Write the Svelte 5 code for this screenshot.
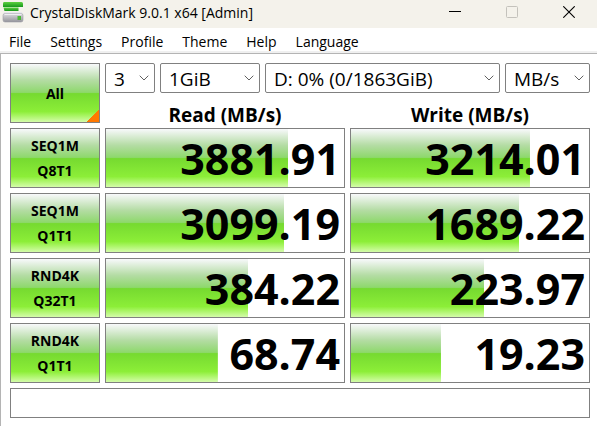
<script lang="ts">
	const menu = ['File', 'Settings', 'Profile', 'Theme', 'Help', 'Language'];

	type Test = {
		name: string;
		queue: string;
		read: string;
		write: string;
		readBar: number;
		writeBar: number;
	};

	const tests: Test[] = [
		{ name: 'SEQ1M', queue: 'Q8T1', read: '3881.91', write: '3214.01', readBar: 76.5, writeBar: 75.2 },
		{ name: 'SEQ1M', queue: 'Q1T1', read: '3099.19', write: '1689.22', readBar: 74.8, writeBar: 70.6 },
		{ name: 'RND4K', queue: 'Q32T1', read: '384.22', write: '223.97', readBar: 59.7, writeBar: 55.9 },
		{ name: 'RND4K', queue: 'Q1T1', read: '68.74', write: '19.23', readBar: 47, writeBar: 37.8 }
	];

	const settings = [
		{ id: 'count', label: 'Test count', options: ['3', '1', '5', '9'] },
		{ id: 'size', label: 'Test size', options: ['1GiB', '16MiB', '64GiB'] },
		{ id: 'drive', label: 'Target drive', options: ['D: 0% (0/1863GiB)'] },
		{ id: 'unit', label: 'Unit', options: ['MB/s', 'GB/s', 'IOPS', 'μs'] }
	];

	let comment = '';
</script>

<svelte:head>
	<title>CrystalDiskMark</title>
</svelte:head>

<div class="window">
	<header class="titlebar">
		<svg class="logo" width="22" height="22" viewBox="0 0 22 22" aria-hidden="true">
			<defs>
				<linearGradient id="leaf" x1="0" y1="0" x2="0" y2="1">
					<stop offset="0" stop-color="#5cd040" />
					<stop offset="1" stop-color="#18981c" />
				</linearGradient>
				<linearGradient id="case" x1="0" y1="0" x2="0" y2="1">
					<stop offset="0" stop-color="#dcdce0" />
					<stop offset="1" stop-color="#94949a" />
				</linearGradient>
			</defs>
			<path d="M2 11h18l1 3H1z" fill="#e8e8ec" />
			<path d="M2 1h17.500q1.500 0 1.500 1.500V6H1V2.500Q1 1 2 1z" fill="url(#leaf)" />
			<path d="M1.500 6.500h15V10h-14z" fill="url(#leaf)" />
			<rect x="1" y="12.500" width="20" height="8.500" rx="2" fill="url(#case)" stroke="#a0a0a6" stroke-width=".6" />
			<path d="M2.500 13.300h17" stroke="#f6f6f8" />
			<rect x="15.500" y="15" width="3.500" height="4" fill="#4cb838" />
		</svg>
		<h1 class="title">CrystalDiskMark 9.0.1 x64 [Admin]</h1>
		<div class="controls">
			<button class="control" aria-label="Minimize">
				<svg width="12" height="12" viewBox="0 0 12 12"><path d="M0 5.5h12" stroke="#000" /></svg>
			</button>
			<button class="control" aria-label="Maximize" disabled>
				<svg width="12" height="12" viewBox="0 0 12 12">
					<rect x=".5" y=".5" width="11" height="11" rx="1" fill="none" stroke="#c4c2bc" />
				</svg>
			</button>
			<button class="control" aria-label="Close">
				<svg width="12" height="12" viewBox="0 0 12 12"><path d="M.3.3l11.4 11.4M11.7.3L.3 11.7" stroke="#000" stroke-width="1.1" /></svg>
			</button>
		</div>
	</header>

	<nav class="menu">
		{#each menu as item}
			<button class="menu-item">{item}</button>
		{/each}
	</nav>

	<main class="body">
		<div class="row">
			<button class="run all">All</button>
			<div class="top">
				<div class="settings">
					{#each settings as setting}
						<div class="picker {setting.id}">
							<select id={setting.id} aria-label={setting.label}>
								{#each setting.options as option}
									<option>{option}</option>
								{/each}
							</select>
							<svg class="chevron" width="10" height="6" viewBox="0 0 10 6" aria-hidden="true">
								<path d="M.7.7L5 5 9.3.7" fill="none" stroke="#606060" />
							</svg>
						</div>
					{/each}
				</div>
				<div class="headings">
					<h2>Read (MB/s)</h2>
					<h2>Write (MB/s)</h2>
				</div>
			</div>
		</div>

		{#each tests as test}
			<div class="row">
				<button class="run">{test.name}<br />{test.queue}</button>
				<div class="results">
					<div class="meter" style="--level: {test.readBar}%">{test.read}</div>
					<div class="meter" style="--level: {test.writeBar}%">{test.write}</div>
				</div>
			</div>
		{/each}

		<input class="comment" type="text" aria-label="Comment" bind:value={comment} />
	</main>
</div>

<style>
	:global(body) {
		margin: 0;
		background: #fff;
	}

	* {
		box-sizing: border-box;
	}

	.window {
		--green: linear-gradient(#f8f9fb 0%, #b4dca4 28%, #8ed86c 49%, #76da30 51%, #8cee38 82%, #a4f45c 88%, #d4fcaa 100%);
		min-height: 100vh;
		display: flex;
		flex-direction: column;
		font-family: 'Segoe UI', 'Open Sans', 'Noto Sans', sans-serif;
		color: #000;
	}

	button,
	select,
	input {
		font: inherit;
		color: inherit;
		margin: 0;
		padding: 0;
	}

	.titlebar {
		display: flex;
		align-items: center;
		height: 28px;
		padding-left: 2px;
		background: #f4f2eb;
	}

	.logo {
		margin-bottom: 4px;
	}

	.title {
		flex: 1;
		margin: 0 0 2px 6px;
		font-size: 14px;
		font-weight: 400;
		line-height: 20px;
		white-space: nowrap;
	}

	.controls {
		display: flex;
		align-self: stretch;
		padding-bottom: 4px;
	}

	.control {
		display: flex;
		align-items: center;
		justify-content: center;
		width: 57px;
		border: none;
		background: none;
	}

	.menu {
		display: flex;
		gap: 1px;
		height: 26px;
		border-bottom: 1px solid #b4b4b4;
		box-shadow: inset 0 -2px #f0f0f0;
	}

	.menu-item {
		padding: 2px 9px 0;
		border: none;
		background: none;
		font-size: 14px;
		line-height: 22px;
	}

	.body {
		flex: 1;
		display: flex;
		flex-direction: column;
		gap: 5px;
		padding: 9px 7px 8px 9px;
		border-left: 1px solid #b4b4b4;
	}

	.row {
		display: flex;
		gap: 5px;
	}

	.run {
		flex: none;
		width: 90px;
		height: 60px;
		border: 1px solid #808080;
		background: var(--green);
		font-size: 14px;
		font-weight: 700;
		line-height: 25px;
	}

	.all {
		background:
			linear-gradient(135deg, transparent 50%, #ff7800 50%) right bottom / 12px 12px no-repeat,
			var(--green);
	}

	.top {
		flex: 1;
		display: flex;
		flex-direction: column;
	}

	.settings {
		display: flex;
		gap: 5px;
	}

	.picker {
		position: relative;
	}

	.count {
		width: 50px;
	}

	.size {
		width: 100px;
	}

	.drive {
		flex: 1;
	}

	.unit {
		width: 85px;
	}

	.picker select {
		appearance: none;
		display: block;
		width: 100%;
		height: 30px;
		padding: 2px 0 0 8px;
		border: 1px solid #808080;
		border-radius: 2px;
		background: #fff;
		font-size: 19px;
	}

	.chevron {
		position: absolute;
		top: 12px;
		right: 6px;
		pointer-events: none;
	}

	.headings,
	.results {
		flex: 1;
		display: grid;
		grid-template-columns: 1fr 1fr;
		gap: 5px;
	}

	.headings h2 {
		margin: 0;
		padding-top: 8px;
		font-size: 19px;
		font-weight: 700;
		line-height: 28px;
		height: 30px;
		text-align: center;
	}

	.meter {
		height: 60px;
		padding-right: 4px;
		border: 1px solid #808080;
		background: var(--green) left top / var(--level) 100% no-repeat;
		font-size: 43px;
		font-weight: 700;
		line-height: 60px;
		text-align: right;
	}

	.comment {
		width: 100%;
		height: 30px;
		padding: 0 6px;
		border: 1px solid #808080;
		border-radius: 0;
		background: #fff;
		font-size: 14px;
	}
</style>
